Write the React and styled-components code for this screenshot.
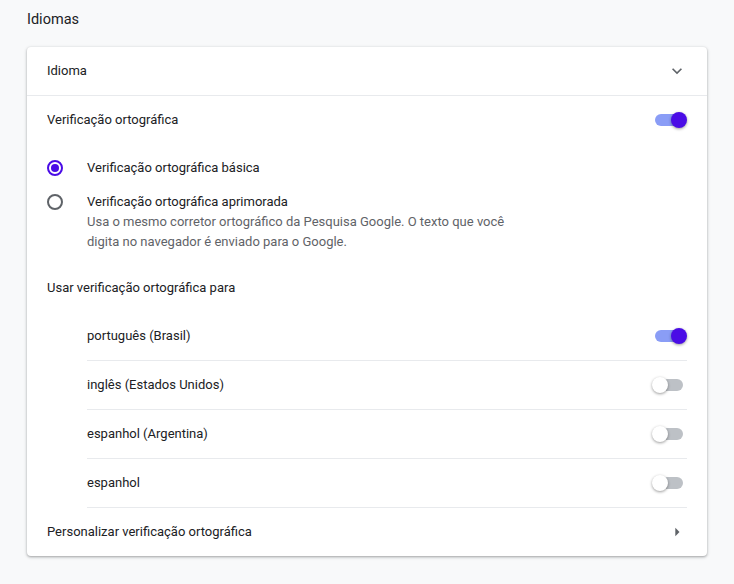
import React, { useState } from 'react';
import styled, { createGlobalStyle } from 'styled-components';

const GlobalStyle = createGlobalStyle`
  body {
    margin: 0;
    background: #f8f9fa;
    font-family: Roboto, "Liberation Sans", sans-serif;
    color: #202124;
  }
`;

const Page = styled.div`
  padding: 10px 27px 28px;
`;

const Title = styled.h2`
  margin: 0 0 17px;
  font-size: 14.5px;
  font-weight: 400;
  line-height: 20px;
  color: #202124;
`;

const Card = styled.div`
  background: #fff;
  border-radius: 4px;
  box-shadow: 0 1px 2px 0 rgba(60, 64, 67, 0.3), 0 1px 3px 1px rgba(60, 64, 67, 0.15);
`;

const Row = styled.div`
  display: flex;
  align-items: center;
  justify-content: space-between;
  height: 47px;
  padding: 0 20px 1px;
  font-size: 13px;
  border-bottom: ${props => (props.divider ? '1px solid #e8eaed' : 'none')};
  cursor: ${props => (props.clickable ? 'pointer' : 'default')};
`;

const RadioRow = styled.label`
  display: flex;
  align-items: ${props => (props.top ? 'flex-start' : 'center')};
  gap: 24px;
  min-height: 48px;
  padding: ${props => (props.top ? '0 20px 12px' : '0 20px')};
  font-size: 13px;
  cursor: pointer;
`;

const RadioCircle = styled.span`
  flex: none;
  box-sizing: border-box;
  width: 16px;
  height: 16px;
  margin-top: ${props => (props.top ? '2px' : '0')};
  border-radius: 50%;
  border: 2px solid ${props => (props.checked ? '#4a0ce6' : '#5f6368')};
  display: flex;
  align-items: center;
  justify-content: center;

  &::after {
    content: '';
    width: 8px;
    height: 8px;
    border-radius: 50%;
    background: ${props => (props.checked ? '#4a0ce6' : 'transparent')};
  }
`;

const RadioText = styled.div`
  line-height: 20px;
`;

const Secondary = styled.div`
  color: #5f6368;
  max-width: 430px;
`;

const LangList = styled.div`
  margin: 0 20px 0 60px;
`;

const LangRow = styled.div`
  display: flex;
  align-items: center;
  justify-content: space-between;
  height: 47px;
  padding-bottom: 1px;
  font-size: 13px;
  border-bottom: 1px solid #e8eaed;
`;

const ToggleBox = styled.button`
  position: relative;
  flex: none;
  width: 36px;
  height: 20px;
  padding: 0;
  border: none;
  background: none;
  cursor: pointer;
`;

const Track = styled.span`
  position: absolute;
  left: 4px;
  top: 4px;
  width: 28px;
  height: 12px;
  border-radius: 6px;
  background: ${props => (props.on ? '#8a9df6' : '#bdc1c6')};
`;

const Knob = styled.span`
  position: absolute;
  top: 2px;
  left: ${props => (props.on ? '20px' : '1px')};
  width: 16px;
  height: 16px;
  border-radius: 50%;
  background: ${props => (props.on ? '#4a0ce6' : '#fff')};
  box-shadow: 0 1px 3px rgba(0, 0, 0, 0.4);
  transition: left 0.1s ease;
`;

const IconBox = styled.span`
  display: flex;
  width: 20px;
  height: 20px;
  color: #5f6368;
`;

function Toggle({ on, onChange }) {
  return (
    <ToggleBox onClick={onChange} aria-pressed={on}>
      <Track on={on ? 1 : 0} />
      <Knob on={on ? 1 : 0} />
    </ToggleBox>
  );
}

function Radio({ checked, top }) {
  return <RadioCircle checked={checked} top={top} />;
}

const languages = [
  'português (Brasil)',
  'inglês (Estados Unidos)',
  'espanhol (Argentina)',
  'espanhol',
];

export default function App() {
  const [spell, setSpell] = useState(true);
  const [mode, setMode] = useState('basic');
  const [langs, setLangs] = useState([true, false, false, false]);

  const flip = i => setLangs(langs.map((v, j) => (j === i ? !v : v)));

  return (
    <>
      <GlobalStyle />
      <Page>
        <Title>Idiomas</Title>
        <Card>
          <Row divider clickable>
            <span>Idioma</span>
            <IconBox>
              <svg viewBox="0 0 24 24" width="20" height="20" fill="currentColor">
                <path d="M16.59 8.59L12 13.17 7.41 8.59 6 10l6 6 6-6z" />
              </svg>
            </IconBox>
          </Row>
          <Row>
            <span>Verificação ortográfica</span>
            <Toggle on={spell} onChange={() => setSpell(!spell)} />
          </Row>
          <RadioRow onClick={() => setMode('basic')}>
            <Radio checked={mode === 'basic'} />
            <RadioText>Verificação ortográfica básica</RadioText>
          </RadioRow>
          <RadioRow top onClick={() => setMode('enhanced')}>
            <Radio checked={mode === 'enhanced'} top />
            <RadioText>
              Verificação ortográfica aprimorada
              <Secondary>
                Usa o mesmo corretor ortográfico da Pesquisa Google. O texto que você
                digita no navegador é enviado para o Google.
              </Secondary>
            </RadioText>
          </RadioRow>
          <Row>
            <span>Usar verificação ortográfica para</span>
          </Row>
          <LangList>
            {languages.map((name, i) => (
              <LangRow key={name}>
                <span>{name}</span>
                <Toggle on={langs[i]} onChange={() => flip(i)} />
              </LangRow>
            ))}
          </LangList>
          <Row clickable>
            <span>Personalizar verificação ortográfica</span>
            <IconBox>
              <svg viewBox="0 0 24 24" width="20" height="20" fill="currentColor">
                <path d="M10 17l5-5-5-5v10z" />
              </svg>
            </IconBox>
          </Row>
        </Card>
      </Page>
    </>
  );
}
